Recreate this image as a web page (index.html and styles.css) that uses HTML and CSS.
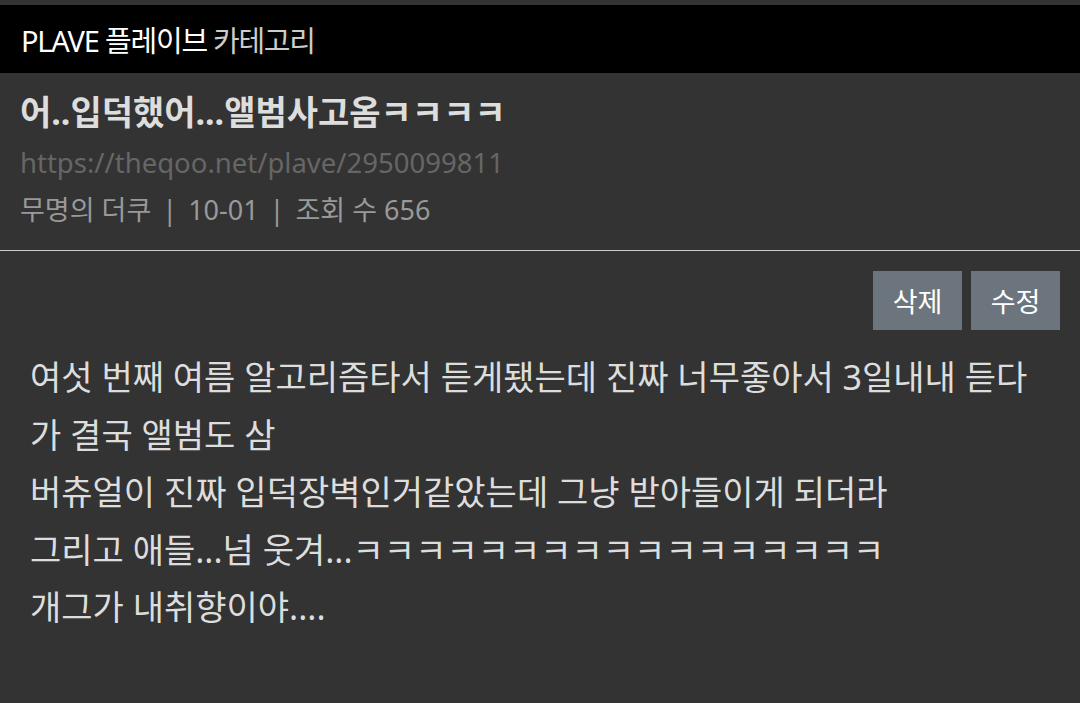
FILE: index.html
```html
<!DOCTYPE html>
<html lang="ko">
<head>
    <meta charset="UTF-8">
    <meta name="viewport" content="width=device-width, initial-scale=1.0">
    <title>PLAVE 플레이브 카테고리</title>
    <link rel="stylesheet" href="styles.css">
</head>
<body>
    <!-- 상단 카테고리 바 -->
    <header class="category-bar">
        <span class="board-name">PLAVE 플레이브</span>
        <span class="board-label">카테고리</span>
    </header>

    <!-- 글 정보 -->
    <section class="post-head">
        <h1 class="post-title">어..입덕했어...앨범사고옴ㅋㅋㅋㅋ</h1>
        <div class="post-url">https://theqoo.net/plave/2950099811</div>
        <div class="post-meta">
            <span>무명의 더쿠</span>
            <span class="sep">|</span>
            <span>10-01</span>
            <span class="sep">|</span>
            <span>조회 수 656</span>
        </div>
    </section>

    <!-- 본문 -->
    <section class="post-body">
        <div class="post-actions">
            <button class="btn">삭제</button>
            <button class="btn">수정</button>
        </div>
        <div class="post-content">
            <p>여섯 번째 여름 알고리즘타서 듣게됐는데 진짜 너무좋아서 3일내내 듣다가 결국 앨범도 삼</p>
            <p>버츄얼이 진짜 입덕장벽인거같았는데 그냥 받아들이게 되더라</p>
            <p>그리고 애들...넘 웃겨...ㅋㅋㅋㅋㅋㅋㅋㅋㅋㅋㅋㅋㅋㅋㅋㅋㅋ</p>
            <p>개그가 내취향이야....</p>
        </div>
    </section>
</body>
</html>
```

FILE: styles.css
```css
:root {
    --bg: #333333;
    --bar-bg: #000;
    --text-main: #dddddd;
    --text-url: #666666;
    --text-meta: #999999;
    --line: #cccccc;
    --btn-bg: #6c757d;
}

body {
    margin: 0;
    padding-top: 5px;
    background: var(--bg);
    color: var(--text-main);
    font-family: "Noto Sans", "Noto Sans CJK KR", sans-serif;
}

/* 카테고리 바 */
.category-bar {
    height: 68px;
    display: flex;
    align-items: center;
    gap: 6px;
    padding: 0 21px;
    background: var(--bar-bg);
    font-size: 29px;
    letter-spacing: -1.2px;
}

.board-name {
    color: #fff;
}

.board-label {
    color: #cccccc;
}

/* 글 정보 */
.post-head {
    padding: 15px 20px 20px;
    border-bottom: 1px solid var(--line);
}

.post-title {
    margin: 0;
    font-size: 34px;
    font-weight: 700;
    line-height: 48px;
    color: var(--text-main);
}

.post-url {
    font-size: 27.5px;
    line-height: 54px;
    color: var(--text-url);
}

.post-meta {
    display: flex;
    gap: 11px;
    font-size: 27px;
    line-height: 40px;
    color: var(--text-meta);
}

/* 본문 */
.post-body {
    padding: 20px 20px 0 30px;
}

.post-actions {
    display: flex;
    justify-content: flex-end;
    gap: 9px;
}

.btn {
    width: 89px;
    height: 59px;
    padding: 0;
    border: none;
    border-radius: 0;
    background: var(--btn-bg);
    color: #fff;
    font-family: inherit;
    font-size: 27px;
}

.post-content {
    margin-top: 19px;
    padding-right: 10px;
    font-size: 34px;
    line-height: 57.5px;
}

.post-content p {
    margin: 0;
}
```
